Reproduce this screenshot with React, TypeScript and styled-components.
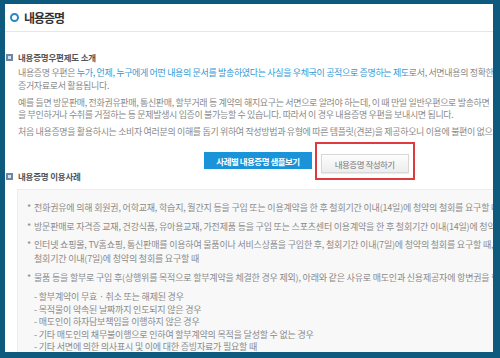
import React from "react";
import styled, { createGlobalStyle } from "styled-components";

const Global = createGlobalStyle`
  html, body { margin: 0; padding: 0; background: #ffffff; }
  body { font-family: "Noto Sans CJK KR", "Noto Sans", sans-serif; }
`;

const Frame = styled.div`
  width: 500px;
  height: 358px;
  box-sizing: border-box;
  border-style: solid;
  border-color: #0e5a7e;
  border-width: 4px 7px 6px 5px;
  background: #ffffff;
  overflow: hidden;
  position: relative;
`;

const Inner = styled.div`
  width: 600px;
`;

const TitleBar = styled.div`
  height: 27px;
  border-bottom: 1px solid #e6e6e6;
  display: flex;
  align-items: center;
  gap: 5px;
  padding-left: 5px;
`;

const Ring = styled.span`
  width: 5px;
  height: 5px;
  border-radius: 50%;
  border: 2px solid #2a86c6;
  background: #ffffff;
`;

const Title = styled.h1`
  margin: 0;
  font-size: 12px;
  font-weight: 700;
  letter-spacing: -1px;
  color: #333333;
  line-height: 14px;
`;

const Section = styled.section<{ $top: number }>`
  margin-top: ${(p) => p.$top}px;
  padding-left: 1px;
`;

const Heading = styled.h2<{ $lh: number }>`
  margin: 0;
  display: flex;
  align-items: center;
  gap: 5px;
  font-size: 8.5px;
  line-height: ${(p) => p.$lh}px;
  font-weight: 700;
  letter-spacing: -0.2px;
  color: #555555;
`;

const SquareIcon = styled.span`
  width: 3px;
  height: 3px;
  border: 2px solid #6a88a6;
  background: #d9e3ee;
  flex: none;
`;

const Body = styled.div`
  padding-left: 12px;
  margin-top: 4px;
`;

const Para = styled.p`
  margin: 0 0 4px 0;
  font-size: 9px;
  line-height: 12.8px;
  letter-spacing: -0.35px;
  color: #8a8a8a;
  white-space: nowrap;
`;

const Blue = styled.span`
  color: #3399d6;
`;

const ButtonRow = styled.div`
  display: flex;
  justify-content: center;
  align-items: center;
  gap: 9px;
  margin-top: 13.5px;
  height: 17px;
  padding-left: 2px;
`;

const Button = styled.button<{ $primary?: boolean }>`
  height: ${(p) => (p.$primary ? 17 : 19)}px;
  padding: 0 ${(p) => (p.$primary ? 11 : 13)}px;
  font-family: "Noto Sans CJK KR", "Noto Sans", sans-serif;
  font-size: 8.5px;
  letter-spacing: -0.5px;
  font-weight: ${(p) => (p.$primary ? 700 : 400)};
  color: ${(p) => (p.$primary ? "#ffffff" : "#777777")};
  background: ${(p) =>
    p.$primary ? "#1a93d9" : "linear-gradient(#fdfdfd, #ededed)"};
  border: 1px solid ${(p) => (p.$primary ? "#1a93d9" : "#d8d8d8")};
  border-radius: 0;
  box-shadow: ${(p) => (p.$primary ? "none" : "0 1px 1px rgba(0,0,0,0.08)")};
`;

const Highlight = styled.div`
  position: relative;
`;

const Mark = styled.span`
  position: absolute;
  left: -6px;
  right: -6px;
  top: -7px;
  bottom: -7px;
  border: 2.5px solid #df3a3f;
  pointer-events: none;
`;

const Box = styled.div`
  margin: 7px 0 0 11px;
  background: #f8f8f8;
  border: 1px solid #ececec;
  padding: 11px 0 20px 9px;
`;

const BulletList = styled.ul`
  list-style: none;
  margin: 0;
  padding: 0;
  display: flex;
  flex-direction: column;
  gap: 4.5px;
`;

const Bullet = styled.li`
  display: flex;
  gap: 3px;
  font-size: 9px;
  line-height: 14px;
  letter-spacing: -0.2px;
  color: #8a8a8a;
  white-space: nowrap;
`;

const Star = styled.span`
  flex: none;
  width: 4px;
`;

const DashList = styled.ul`
  list-style: none;
  margin: 6.5px 0 0 7px;
  padding: 0;
`;

const Dash = styled.li`
  font-size: 9px;
  line-height: 12.4px;
  letter-spacing: -0.2px;
  color: #8a8a8a;
  white-space: nowrap;
`;

const bullets: string[][] = [
  ["전화권유에 의해 회원권, 어학교재, 학습지, 월간지 등을 구입 또는 이용계약을 한 후 철회기간 이내(14일)에 청약의 철회를 요구할 때"],
  ["방문판매로 자격증 교재, 건강식품, 유아용교재, 가전제품 등을 구입 또는 스포츠센터 이용계약을 한 후 철회기간 이내(14일)에 청약의 철회를 요구할 때"],
  [
    "인터넷 쇼핑몰, TV홈쇼핑, 통신판매를 이용하여 물품이나 서비스상품을 구입한 후, 철회기간 이내(7일)에 청약의 철회를 요구할 때,",
    "철회기간 이내(7일)에 청약의 철회를 요구할 때",
  ],
  ["물품 등을 할부로 구입 후(상행위를 목적으로 할부계약을 체결한 경우 제외), 아래와 같은 사유로 매도인과 신용제공자에 항변권을 행사할 때"],
];

const dashes = [
  "- 할부계약이 무효 · 취소 또는 해제된 경우",
  "- 목적물이 약속된 날짜까지 인도되지 않은 경우",
  "- 매도인이 하자담보책임을 이행하지 않은 경우",
  "- 기타 매도인의 채무불이행으로 인하여 할부계약의 목적을 달성할 수 없는 경우",
  "- 기타 서면에 의한 의사표시 및 이에 대한 증빙자료가 필요할 때",
];

export default function App() {
  return (
    <>
      <Global />
      <Frame>
        <Inner>
          <TitleBar>
            <Ring />
            <Title>내용증명</Title>
          </TitleBar>

          <Section $top={19}>
            <Heading $lh={12}>
              <SquareIcon />
              내용증명우편제도 소개
            </Heading>
            <Body>
              <Para>
                내용증명 우편은{" "}
                <Blue>
                  누가, 언제, 누구에게 어떤 내용의 문서를 발송하였다는 사실을 우체국이 공적으로 증명하는 제도
                </Blue>
                로서, 서면내용의 정확한 기록을 남기는
                <br />
                증거자료로서 활용됩니다.
              </Para>
              <Para>
                예를 들면 방문판매, 전화권유판매, 통신판매, 할부거래 등 계약의 해지요구는 서면으로 알려야 하는데, 이 때 만일 일반우편으로 발송하면
                <br />
                을 부인하거나 수취를 거절하는 등 문제발생시 입증이 불가능할 수 있습니다. 따라서 이 경우 내용증명 우편을 보내시면 됩니다.
              </Para>
              <Para>
                처음 내용증명을 활용하시는 소비자 여러분의 이해를 돕기 위하여 작성방법과 유형에 따른 템플릿(견본)을 제공하오니 이용에 불편이 없으시기 바랍니다.
              </Para>
            </Body>
            <ButtonRow>
              <Button $primary>사례별 내용증명 샘플보기</Button>
              <Highlight>
                <Button>내용증명 작성하기</Button>
                <Mark />
              </Highlight>
            </ButtonRow>
          </Section>

          <Section $top={2}>
            <Heading $lh={11}>
              <SquareIcon />
              내용증명 이용사례
            </Heading>
            <Box>
              <BulletList>
                {bullets.map((lines, i) => (
                  <Bullet key={i}>
                    <Star>*</Star>
                    <span>
                      {lines.map((l, j) => (
                        <React.Fragment key={j}>
                          {j > 0 && <br />}
                          {l}
                        </React.Fragment>
                      ))}
                    </span>
                  </Bullet>
                ))}
              </BulletList>
              <DashList>
                {dashes.map((d) => (
                  <Dash key={d}>{d}</Dash>
                ))}
              </DashList>
            </Box>
          </Section>
        </Inner>
      </Frame>
    </>
  );
}
